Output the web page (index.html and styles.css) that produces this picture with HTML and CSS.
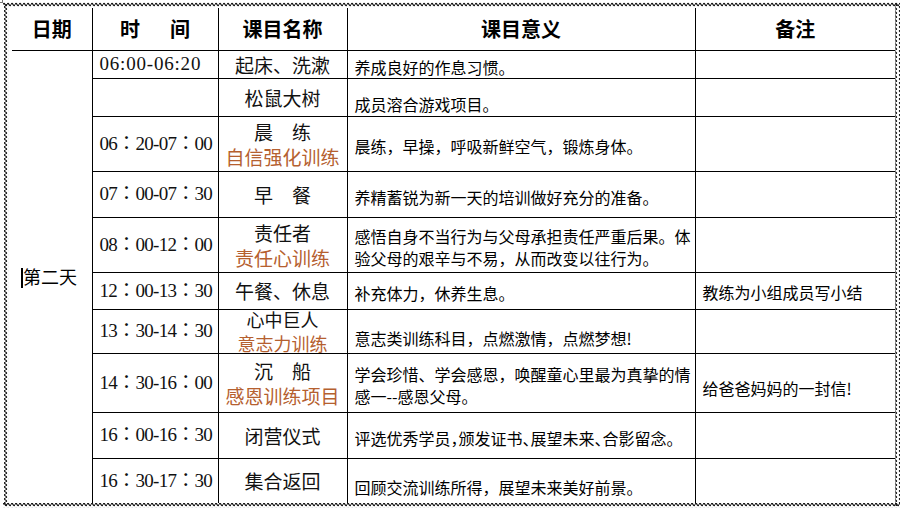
FILE: index.html
```html
<!DOCTYPE html>
<html lang="zh-CN">
<head>
<meta charset="utf-8">
<title>第二天课程安排</title>
<link rel="stylesheet" href="styles.css">
</head>
<body>
<div class="frame">
  <table class="sched">
    <colgroup>
      <col class="c-day"><col class="c-time"><col class="c-name"><col class="c-mean"><col class="c-note">
    </colgroup>
    <tr class="h-head">
      <th>日期</th>
      <th>时&emsp;&ensp;间</th>
      <th>课目名称</th>
      <th>课目意义</th>
      <th>备注</th>
    </tr>
    <tr class="h28">
      <td class="day" rowspan="10"><span class="caret"></span>第二天</td>
      <td class="time half">06:00-06:20</td>
      <td class="name">起床、洗漱</td>
      <td class="mean">养成良好的作息习惯。</td>
      <td class="note"></td>
    </tr>
    <tr class="h38">
      <td class="time"></td>
      <td class="name">松鼠大树</td>
      <td class="mean low">成员溶合游戏项目。</td>
      <td class="note"></td>
    </tr>
    <tr class="h55">
      <td class="time">06：20-07：00</td>
      <td class="name">晨　练<br><span class="sub">自信强化训练</span></td>
      <td class="mean">晨练，早操，呼吸新鲜空气，锻炼身体。</td>
      <td class="note"></td>
    </tr>
    <tr class="h46">
      <td class="time">07：00-07：30</td>
      <td class="name">早　餐</td>
      <td class="mean">养精蓄锐为新一天的培训做好充分的准备。</td>
      <td class="note"></td>
    </tr>
    <tr class="h55">
      <td class="time">08：00-12：00</td>
      <td class="name">责任者<br><span class="sub">责任心训练</span></td>
      <td class="mean">感悟自身不当行为与父母承担责任严重后果。体验父母的艰辛与不易，从而改变以往行为。</td>
      <td class="note"></td>
    </tr>
    <tr class="h37">
      <td class="time">12：00-13：30</td>
      <td class="name">午餐、休息</td>
      <td class="mean">补充体力，休养生息。</td>
      <td class="note">教练为小组成员写小结</td>
    </tr>
    <tr class="h44">
      <td class="time">13：30-14：30</td>
      <td class="name"><div class="stack"><span>心中巨人</span><span class="sub">意志力训练</span></div></td>
      <td class="mean low">意志类训练科目，点燃激情，点燃梦想!</td>
      <td class="note"></td>
    </tr>
    <tr class="h59">
      <td class="time">14：30-16：00</td>
      <td class="name">沉　船<br><span class="sub">感恩训练项目</span></td>
      <td class="mean">学会珍惜、学会感恩，唤醒童心里最为真挚的情感一--感恩父母。</td>
      <td class="note low">给爸爸妈妈的一封信!</td>
    </tr>
    <tr class="h46">
      <td class="time">16：00-16：30</td>
      <td class="name">闭营仪式</td>
      <td class="mean compact">评选优秀学员，颁发证书、展望未来、合影留念。</td>
      <td class="note"></td>
    </tr>
    <tr class="h45">
      <td class="time">16：30-17：30</td>
      <td class="name">集合返回</td>
      <td class="mean low">回顾交流训练所得，展望未来美好前景。</td>
      <td class="note"></td>
    </tr>
  </table>
  <svg class="wave" width="897" height="506" viewBox="0 0 897 506" aria-hidden="true">
    <defs>
      <pattern id="wh" width="4" height="5" patternUnits="userSpaceOnUse">
        <path d="M0 2.5 Q1 0.3 2 2.5 T4 2.5" fill="none" stroke="#111" stroke-width="1.2"/>
      </pattern>
      <pattern id="wv" width="5" height="4" patternUnits="userSpaceOnUse">
        <path d="M2.5 0 Q0.3 1 2.5 2 T2.5 4" fill="none" stroke="#111" stroke-width="1.2"/>
      </pattern>
    </defs>
    <rect x="0" y="0" width="897" height="5" fill="url(#wh)"/>
    <rect x="0" y="501" width="897" height="5" fill="url(#wh)"/>
    <rect x="1" y="2" width="5" height="502" fill="url(#wv)"/>
    <rect x="892" y="2" width="5" height="502" fill="url(#wv)"/>
  </svg>
  <span class="handle tl"></span>
  <span class="handle br"></span>
</div>
</body>
</html>
```
FILE: styles.css
```css
html, body {
  margin: 0;
  padding: 0;
  background: #fff;
}

body {
  font-family: "Noto Sans CJK SC", sans-serif;
  color: #000;
}

.frame {
  position: relative;
  margin: 2px 0 0 3px;
  width: 897px;
  height: 506px;
  box-sizing: border-box;
  padding: 6px 5px 5px 9px;
}

.sched {
  width: 883px;
  height: 495px;
  border-collapse: collapse;
  border-style: hidden;
  table-layout: fixed;
}

.c-day { width: 80px; }
.c-time { width: 126px; }
.c-name { width: 129px; }
.c-mean { width: 348px; }
.c-note { width: 200px; }

.sched th,
.sched td {
  border: 1px solid #000;
  padding: 0;
  vertical-align: middle;
}

.sched th {
  font-weight: 700;
  font-size: 20px;
  line-height: 24px;
  text-align: center;
}

.h-head { height: 42px; }
.h28 { height: 28px; }
.h37 { height: 37px; }
.h38 { height: 38px; }
.h44 { height: 44px; }
.h45 { height: 45px; }
.h46 { height: 46px; }
.h55 { height: 55px; }
.h59 { height: 59px; }

.sched .day {
  font-size: 18px;
  line-height: 22px;
  padding-left: 9px;
  white-space: nowrap;
}

.caret {
  display: inline-block;
  width: 2px;
  height: 20px;
  background: #000;
  vertical-align: -4px;
}

.sched .time {
  font-family: "Liberation Serif", "Noto Sans CJK TC", "Noto Sans CJK SC", serif;
  font-size: 19px;
  line-height: 22px;
  padding-left: 7px;
  letter-spacing: -0.7px;
  white-space: nowrap;
  color: #111;
}

.sched .time.half {
  letter-spacing: 0.8px;
}

.sched .name {
  font-size: 19px;
  line-height: 25px;
  text-align: center;
  white-space: nowrap;
  color: #111;
}

.stack {
  height: 42px;
  display: flex;
  flex-direction: column;
  justify-content: center;
  align-items: center;
  font-size: 18px;
  line-height: 24px;
}

.sub {
  color: #b5602f;
}

.sched .mean {
  font-size: 16px;
  line-height: 22px;
  padding: 5px 2px 0 7px;
}

.sched .mean.low {
  padding-top: 13px;
}

.sched .mean.compact {
  font-feature-settings: "halt";
}

.sched .note {
  font-size: 16px;
  line-height: 22px;
  padding: 3px 2px 0 7px;
}

.sched .note.low {
  padding-top: 10px;
}

.wave {
  position: absolute;
  left: 0;
  top: 0;
  pointer-events: none;
}

.handle {
  position: absolute;
  width: 4px;
  height: 4px;
  border: 1px solid #777;
  background: #fff;
}

.handle.tl {
  left: -6px;
  top: -5px;
}

.handle.br {
  left: 897px;
  top: 510px;
}
```
